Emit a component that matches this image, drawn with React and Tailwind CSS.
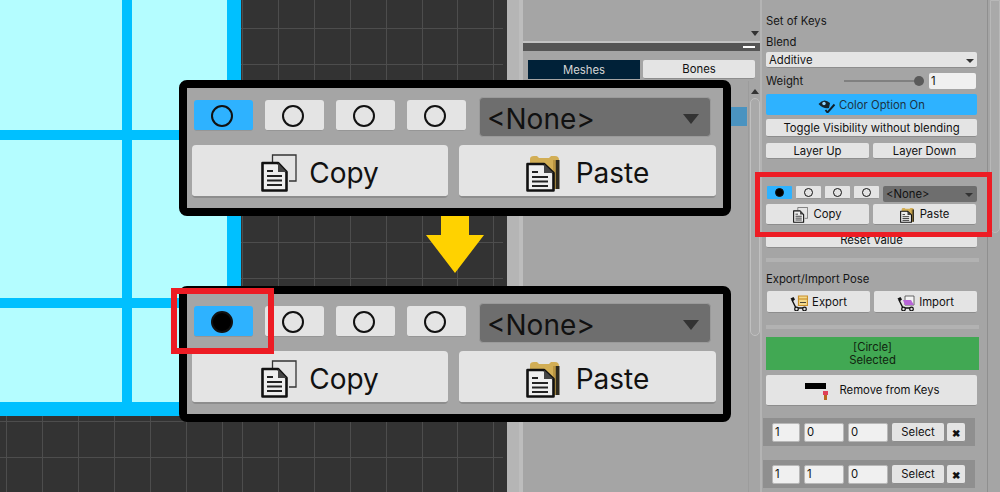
const FONT = "font-['Inter','Liberation_Sans',sans-serif]";

function Canvas() {
  const xs = [242, 278, 314, 350, 386, 422, 457];
  const ys = [28, 64, 99, 135, 171, 206, 242, 278, 314, 349, 385, 421, 457];
  const bx = [6, 42, 78, 114, 150, 186, 222, ...xs];
  return (
    <svg width="507" height="492" className="block shrink-0">
      <rect width="507" height="492" fill="#333333" />
      {bx.map((x) => <line key={x} x1={x + 0.5} x2={x + 0.5} y1="0" y2="492" stroke="#4d4d4d" />)}
      {ys.map((y) => <line key={y} x1="0" x2="503" y1={y + 0.5} y2={y + 0.5} stroke="#4d4d4d" />)}
      <line x1="493.5" x2="493.5" y1="0" y2="492" stroke="#4d4d4d" />
      <rect width="241" height="416" fill="#b4fdff" />
      <rect x="122" width="10" height="416" fill="#00c0ff" />
      <rect x="227" width="14" height="416" fill="#00c0ff" />
      <rect y="130" width="241" height="10" fill="#00c0ff" />
      <rect y="298" width="241" height="10" fill="#00c0ff" />
      <rect y="402" width="241" height="14" fill="#00c0ff" />
    </svg>
  );
}

function CopyIcon({ className }) {
  return (
    <svg viewBox="0 0 36 38" className={className}>
      <path d="M11.5 8V1H35V27H28" fill="none" stroke="#333" strokeWidth="1.3" />
      <path d="M1.5 9H17L25.5 18V36.5H1.5Z" fill="#eee" stroke="#111" strokeWidth="2.6" strokeLinejoin="round" />
      <path d="M17 9V18H25.5Z" fill="#444" />
      <path d="M6 17H12M6 22H21M6 26.5H21M6 31H21" stroke="#222" strokeWidth="2" />
    </svg>
  );
}

function PasteIcon({ className }) {
  return (
    <svg viewBox="0 0 36 38" className={className}>
      <path d="M4 5Q4 2 8 2H11L13 4H23L25 2H29Q33 2 33 6V35H4Z" fill="#d2ae55" />
      <path d="M29.5 6H33.5V35H29.5Z" fill="#2e2a1e" />
      <path d="M27 6H29.5V35H27Z" fill="#b99440" />
      <path d="M1.5 10H18L27.5 19V36.5H1.5Z" fill="#eee" stroke="#111" strokeWidth="2.6" strokeLinejoin="round" />
      <path d="M18 10V19H27.5Z" fill="#444" />
      <path d="M6 18H12M6 23H22M6 27.5H22M6 32H22" stroke="#222" strokeWidth="2" />
    </svg>
  );
}

function CartIcon({ fill, edge, flat }) {
  return (
    <svg viewBox="0 0 18 16" className="w-[18px] h-[16px] shrink-0">
      <path d="M2 5L6 13H16" fill="none" stroke="#111" strokeWidth="1.4" />
      <path d="M0.5 3.5L3.5 2L5 4.5L2.5 6.5Z" fill="#111" />
      <circle cx="6.5" cy="14" r="1.8" fill="#ddd" stroke="#111" strokeWidth="1.2" />
      <circle cx="14.5" cy="14" r="1.8" fill="#ddd" stroke="#111" strokeWidth="1.2" />
      {flat ? (
        <>
          <path d="M8 1H17V10H8Z" fill="#f4f4f4" stroke="#444" strokeWidth="0.8" />
          <path d="M6 5H14L17 10H8Z" fill={fill} />
        </>
      ) : (
        <>
          <path d="M8.5 1H17.5V10.5H8.5Z" fill={fill} stroke={edge} strokeWidth="1.2" />
          <path d="M8.5 4H17.5" stroke={edge} strokeWidth="1.2" />
          <path d="M10 7.5H16" stroke="#222" strokeWidth="0.8" />
        </>
      )}
    </svg>
  );
}

function EyeIcon() {
  return (
    <svg viewBox="0 0 18 14" className="w-[18px] h-[14px] shrink-0">
      <path d="M0.5 5Q6 -1.5 12 4L11 9Q6 10.5 0.5 5Z" fill="#14232c" />
      <circle cx="6" cy="4.5" r="1.7" fill="#8fd4ff" />
      <path d="M7.5 11L9.5 13.5L16.5 5.5" fill="none" stroke="#10202a" strokeWidth="1.9" />
    </svg>
  );
}

function PinIcon() {
  return (
    <svg viewBox="0 0 26 18" className="w-[26px] h-[18px] shrink-0">
      <rect x="1" y="1" width="21" height="6" fill="#000" />
      <rect x="19" y="9" width="5" height="4" fill="#e0405a" />
      <rect x="20" y="13" width="3" height="5" fill="#b86a1e" />
    </svg>
  );
}

function Caret({ className }) {
  return <span className={`w-0 h-0 border-x-transparent border-t-[#333] ${className}`} />;
}

// flat unity style button
function Btn({ className = "", children }) {
  return (
    <div className={`flex items-center justify-center bg-[#e4e4e4] rounded-[2px] border-b border-[#8d8d8d] pt-[2px] text-[#111] text-[11.3px] leading-none ${className}`}>
      {children}
    </div>
  );
}

function Field({ className = "", children }) {
  return (
    <div className={`flex items-center bg-[#f0f0f0] rounded-[2px] border border-[#b8b8b8] pl-[2px] pt-[2px] text-[#111] text-[11.3px] leading-none ${className}`}>
      {children}
    </div>
  );
}

function BigRadio({ on, filled }) {
  return (
    <div className={`flex items-center justify-center w-[59px] h-[31px] pr-[4px] pt-[2px] rounded-[3px] border-b border-[#969696] ${on ? "bg-[#2eb2ff]" : "bg-[#e4e4e4]"}`}>
      <span className={`w-[22px] h-[22px] rounded-full border-[2.5px] border-[#111] ${filled ? "bg-black" : ""}`} />
    </div>
  );
}

function Callout({ className, filled }) {
  return (
    <div className={`absolute left-[179px] w-[552px] h-[136px] bg-[#a5a5a5] border-[8px] border-black rounded-[8px] pt-[9px] pl-[5px] ${className}`}>
      <div className="flex items-start h-[41px]">
        <div className="flex gap-[12px] pl-[2px] pt-[3px]">
          <BigRadio on filled={filled} />
          <BigRadio />
          <BigRadio />
          <BigRadio />
        </div>
        <div className="flex items-center justify-between ml-[13px] w-[232px] h-[40px] bg-[#6e6e6e] border border-[#9a9a9a] rounded-[4px] pl-[7px] pt-[3px] pr-[11px] text-[28px] text-[#111] leading-none">
          <span>&lt;None&gt;</span>
          <Caret className="border-x-[8px] border-t-[10px]" />
        </div>
      </div>
      <div className="flex gap-[11px] mt-[7px]">
        <Btn className="w-[256px] h-[53px] gap-[12px] !pt-[5px] !text-[28px] rounded-[4px] border-b-[2px]">
          <CopyIcon className="w-[36px] h-[38px]" />
          <span>Copy</span>
        </Btn>
        <Btn className="w-[257px] h-[53px] gap-[14px] !pt-[5px] !text-[28px] rounded-[4px] border-b-[2px]">
          <PasteIcon className="w-[36px] h-[38px]" />
          <span>Paste</span>
        </Btn>
      </div>
    </div>
  );
}

function MiddlePanel() {
  return (
    <div className="flex flex-col w-[237px] shrink-0 bg-[#a5a5a5]">
      <div className="flex justify-end h-[41px] pr-[1px] pt-[31px]">
        <Caret className="border-x-[4px] border-t-[5px]" />
      </div>
      <div className="flex items-center justify-end h-[10px] bg-[#555555] border-t-[2px] border-[#c4c4c4] pr-[5px]">
        <span className="w-[12px] h-[2px] bg-white" />
      </div>
      <div className="flex gap-[3px] pl-[5px] mt-[9px]">
        <div className="flex items-center justify-center w-[112px] h-[19px] pt-[2px] bg-[#002138] text-[#d5d5d5] text-[11.3px] leading-none">Meshes</div>
        <Btn className="w-[112px] h-[19px]">Bones</Btn>
      </div>
      <div className="flex flex-1 mt-[2px]">
        <div className="flex-1 pt-[26px]">
          <div className="ml-[200px] w-[24px] h-[19px] bg-[#4a93c0]" />
        </div>
        <div className="flex flex-col items-center w-[12px] pt-[8px] border-l border-[#9c9c9c]">
          <Caret className="!border-t-0 border-b-[5px] border-b-[#333] border-x-[4px]" />
          <div className="w-[10px] h-[238px] mt-[4px] rounded-[5px] bg-[#a9a9a9] border border-[#c0c0c0]" />
        </div>
      </div>
    </div>
  );
}

function SmallRadio({ on, filled }) {
  return (
    <div className={`flex items-center justify-center w-[25px] h-[13px] rounded-[1px] ${on ? "bg-[#2eb2ff]" : "bg-[#e4e4e4] border-b border-[#969696]"}`}>
      <span className={`w-[9px] h-[9px] rounded-full border border-[#111] ${filled ? "bg-black" : ""}`} />
    </div>
  );
}

function KeyRow({ className = "", vals }) {
  return (
    <div className={`flex items-center gap-[4px] w-[212px] h-[28px] -ml-[3px] bg-[#8f8f8f] pl-[9px] ${className}`}>
      <Field className="w-[28px] h-[19px]">{vals[0]}</Field>
      <Field className="w-[40px] h-[19px]">{vals[1]}</Field>
      <Field className="w-[40px] h-[19px]">{vals[2]}</Field>
      <Btn className="w-[52px] h-[19px]">Select</Btn>
      <Btn className="w-[18px] h-[19px] -ml-[1px] !text-[10px] font-bold">✖</Btn>
    </div>
  );
}

function KeysPanel() {
  return (
    <div className="flex w-[228px] shrink-0 bg-[#a5a5a5] border-r border-[#8f8f8f] border-l-[2px] border-l-[#b4b4b4] pl-[4px] text-[#151515] text-[11.3px] leading-none">
      <div className="flex flex-col w-[213px]">
        <div className="mt-[15px] pt-[1px] h-[12px]">Set of Keys</div>
        <div className="mt-[9px] pt-[1px] h-[12px]">Blend</div>
        <div className="flex items-center justify-between w-[211px] h-[16px] mt-[4px] pt-[2px] bg-[#e4e4e4] rounded-[2px] border-b border-[#8d8d8d] pl-[3px] pr-[3px]">
          <span>Additive</span>
          <Caret className="border-x-[4px] border-t-[4px]" />
        </div>
        <div className="flex items-center h-[16px] mt-[5px]">
          <span className="w-[78px] pt-[2px]">Weight</span>
          <div className="flex items-center w-[80px]">
            <div className="w-[71px] h-[2px] bg-[#808080]" />
            <span className="w-[10px] h-[10px] -ml-[1px] rounded-full bg-[#5a5a5a]" />
          </div>
          <Field className="w-[47px] h-[16px] ml-[5px] border-0">1</Field>
        </div>
        <Btn className="w-[211px] h-[21px] mt-[5px] gap-[3px] !bg-[#2eb2ff] border-b-0 !text-[#1c3344]">
          <EyeIcon />
          <span>Color Option On</span>
        </Btn>
        <Btn className="w-[211px] h-[18px] mt-[4px]">Toggle Visibility without blending</Btn>
        <div className="flex gap-[4px] mt-[6px]">
          <Btn className="w-[103px] h-[16px]">Layer Up</Btn>
          <Btn className="w-[103px] h-[16px]">Layer Down</Btn>
        </div>
        <div className="flex items-start h-[18px] mt-[27px] pl-[1px]">
          <div className="flex gap-[4px]">
            <SmallRadio on filled />
            <SmallRadio />
            <SmallRadio />
            <SmallRadio />
          </div>
          <div className="flex items-center justify-between w-[94px] h-[16px] ml-[4px] pt-[1px] bg-[#6e6e6e] rounded-[2px] pl-[3px] pr-[4px] text-[#111]">
            <span>&lt;None&gt;</span>
            <Caret className="border-x-[4px] border-t-[4px]" />
          </div>
        </div>
        <div className="flex gap-[4px]">
          <Btn className="w-[103px] h-[21px] gap-[5px]">
            <CopyIcon className="w-[15px] h-[16px]" />
            <span>Copy</span>
          </Btn>
          <Btn className="w-[103px] h-[21px] gap-[5px]">
            <PasteIcon className="w-[15px] h-[16px]" />
            <span>Paste</span>
          </Btn>
        </div>
        <Btn className="w-[211px] h-[16px] mt-[7px]">Reset Value</Btn>
        <div className="w-[213px] h-[4px] mt-[10px] bg-[#b2b2b2]" />
        <div className="mt-[11px] pt-[1px] h-[12px]">Export/Import Pose</div>
        <div className="flex gap-[4px] mt-[6px] pl-[1px]">
          <Btn className="w-[103px] h-[22px] gap-[4px]">
            <CartIcon fill="#f3d98b" edge="#c9902b" />
            <span>Export</span>
          </Btn>
          <Btn className="w-[103px] h-[22px] gap-[4px]">
            <CartIcon fill="#b865d8" edge="#eee" flat />
            <span>Import</span>
          </Btn>
        </div>
        <div className="w-[213px] h-[4px] mt-[12px] bg-[#b2b2b2]" />
        <div className="flex flex-col items-center justify-center gap-[2px] w-[213px] h-[33px] mt-[8px] pt-[1px] bg-[#41a853] text-[#10240f]">
          <span>[Circle]</span>
          <span>Selected</span>
        </div>
        <Btn className="w-[211px] h-[31px] mt-[5px] gap-[10px]">
          <PinIcon />
          <span>Remove from Keys</span>
        </Btn>
        <KeyRow className="mt-[12px]" vals={["1", "0", "0"]} />
        <KeyRow className="mt-[14px]" vals={["1", "1", "0"]} />
      </div>
    </div>
  );
}

export default function App() {
  return (
    <div className={`relative flex w-[1000px] h-[492px] overflow-hidden bg-[#a5a5a5] ${FONT}`}>
      <Canvas />
      <div className="w-[16px] shrink-0 bg-[#b5b5b5] border-r-[4px] border-[#bdbdbd]" />
      <MiddlePanel />
      <KeysPanel />
      <div className="flex-1 pl-[2px]">
        <div className="w-[10px] h-[233px] rounded-b-[5px] bg-[#a9a9a9] border border-[#b8b8b8]" />
      </div>

      <Callout className="top-[80px]" />
      <Callout className="top-[286px]" filled />

      {/* down arrow between the two callouts */}
      <svg width="58" height="57" className="absolute left-[426px] top-[216px]">
        <path d="M15 0H43V19H58L29 57L0 19H15Z" fill="#ffd200" />
      </svg>

      <div className="absolute left-[171px] top-[288px] w-[103px] h-[66px] border-[6px] border-[#ed1c24]" />
      <div className="absolute left-[755px] top-[172px] w-[237px] h-[65px] border-[5px] border-[#ed1c24]" />
    </div>
  );
}
